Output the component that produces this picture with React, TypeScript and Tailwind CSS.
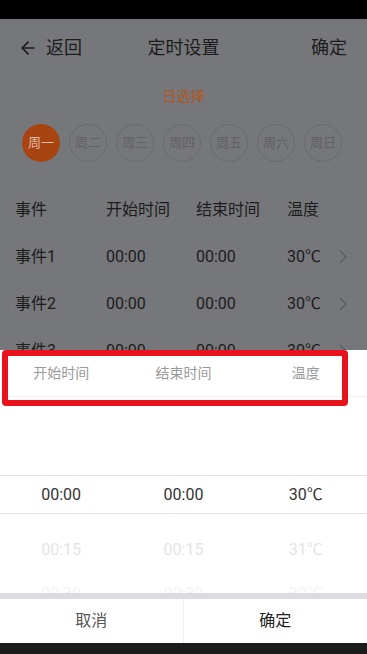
import { ArrowLeft, ChevronRight } from "lucide-react";

const days = ["周一", "周二", "周三", "周四", "周五", "周六", "周日"];

const events = [
  { name: "事件1", start: "00:00", end: "00:00", temp: "30℃" },
  { name: "事件2", start: "00:00", end: "00:00", temp: "30℃" },
  { name: "事件3", start: "00:00", end: "00:00", temp: "30℃" },
];

const font = { fontFamily: "Roboto, 'Noto Sans CJK SC', sans-serif" };

export default function App() {
  return (
    <div className="relative w-[367px] h-[654px] flex flex-col overflow-hidden bg-white" style={font}>
      {/* Status bar */}
      <div className="h-[19px] shrink-0 bg-black"></div>

      {/* Dimmed page */}
      <div className="h-[331px] shrink-0 overflow-hidden bg-[#76777a] text-[#1c1c1c]">
        <div className="h-[58px] flex items-center justify-between px-[18px]">
          <div className="flex items-center gap-[8px] w-[90px]">
            <ArrowLeft className="w-[20px] h-[20px]" strokeWidth={2} />
            <span className="text-[18px] leading-none">返回</span>
          </div>
          <span className="text-[18px] leading-none">定时设置</span>
          <div className="w-[90px] flex justify-end pr-[2px]">
            <span className="text-[18px] leading-none">确定</span>
          </div>
        </div>

        <div className="h-[38px] flex items-center justify-center">
          <span className="text-[14px] text-[#b0561e]">日选择</span>
        </div>

        <div className="mt-[9px] flex gap-[9px] px-[22px]">
          {days.map((d, i) =>
            i === 0 ? (
              <div
                key={d}
                className="w-[38px] h-[38px] rounded-full bg-[#a8440f] flex items-center justify-center text-[13px] text-[#dcbcae]"
              >
                {d}
              </div>
            ) : (
              <div
                key={d}
                className="w-[38px] h-[38px] rounded-full border border-[#6b6b6e] flex items-center justify-center text-[13px] text-[#616164]"
              >
                {d}
              </div>
            )
          )}
        </div>

        <div className="mt-[24px]">
          <div className="h-[47px] grid grid-cols-[91px_90px_91px_1fr] items-center pl-[15px] text-[16px]">
            <span>事件</span>
            <span>开始时间</span>
            <span>结束时间</span>
            <span>温度</span>
          </div>
          {events.map((e) => (
            <div
              key={e.name}
              className="h-[47px] grid grid-cols-[91px_90px_91px_1fr] items-center pl-[15px] text-[16px]"
            >
              <span>{e.name}</span>
              <span>{e.start}</span>
              <span>{e.end}</span>
              <div className="flex items-center justify-between pr-[12px]">
                <span>{e.temp}</span>
                <ChevronRight className="w-[24px] h-[26px] text-[#59595b]" strokeWidth={1.1} />
              </div>
            </div>
          ))}
        </div>
      </div>

      {/* Bottom sheet */}
      <div className="h-[47px] shrink-0 grid grid-cols-3 items-center border-b border-[#f0f0f0] text-[14px] text-[#9a9a9a]">
        <span className="text-center">开始时间</span>
        <span className="text-center">结束时间</span>
        <span className="text-center">温度</span>
      </div>

      <div className="h-[196px] shrink-0 overflow-hidden flex flex-col">
        <div className="h-[78px] shrink-0"></div>
        <div className="h-[39px] shrink-0 grid grid-cols-3 items-center border-y border-[#e6e6e8] text-[16px] text-[#333]">
          <span className="text-center">00:00</span>
          <span className="text-center">00:00</span>
          <span className="text-center">30℃</span>
        </div>
        <div className="h-[72px] shrink-0 grid grid-cols-3 items-center text-[16px] text-[#e4e4e6]">
          <span className="text-center">00:15</span>
          <span className="text-center">00:15</span>
          <span className="text-center">31℃</span>
        </div>
        <div className="shrink-0 grid grid-cols-3 text-[16px] leading-[16px] text-[#f3f3f5]">
          <span className="text-center">00:30</span>
          <span className="text-center">00:30</span>
          <span className="text-center">32℃</span>
        </div>
      </div>

      <div className="h-[6px] shrink-0 bg-[#dcdce0]"></div>

      <div className="h-[44px] shrink-0 grid grid-cols-2 text-[16px]">
        <div className="flex items-center justify-center border-r border-[#eeeeee] text-[#555]">取消</div>
        <div className="flex items-center justify-center text-[#222]">确定</div>
      </div>

      <div className="flex-1 bg-[#1b1b1b]"></div>

      {/* Highlight annotation */}
      <div className="absolute left-[2px] top-[350px] w-[346px] h-[56px] border-[6px] border-[#e8131c] rounded-[4px]"></div>
    </div>
  );
}
